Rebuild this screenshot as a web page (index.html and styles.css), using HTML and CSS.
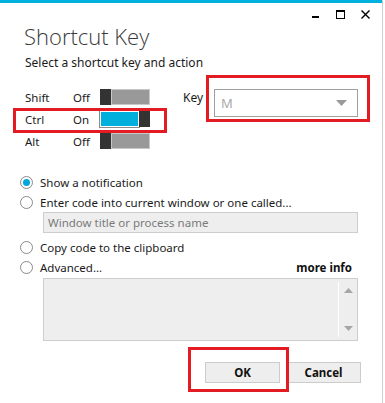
FILE: index.html
```html
<!DOCTYPE html>
<html>
<head>
<meta charset="utf-8">
<link rel="stylesheet" href="styles.css">
</head>
<body>
<div class="window">
  <div class="accent"></div>
  <div class="titlebar">
    <svg class="ctl" width="9" height="9" viewBox="0 0 9 9"><rect x="1" y="6" width="7" height="2" fill="#000"/></svg>
    <svg class="ctl" width="9" height="9" viewBox="0 0 9 9"><rect x="0.5" y="0.5" width="8" height="8" fill="none" stroke="#000"/><rect x="0.5" y="0.5" width="8" height="1.5" fill="#000"/></svg>
    <svg class="ctl" width="9" height="9" viewBox="0 0 9 9"><path d="M0.5 0.5 L8.5 8.5 M8.5 0.5 L0.5 8.5" stroke="#000" stroke-width="1.4"/></svg>
  </div>
  <h1 class="title">Shortcut Key</h1>
  <p class="subtitle">Select a shortcut key and action</p>

  <div class="keys">
    <div class="mods">
      <div class="mod"><span class="mod-name">Shift</span><span class="mod-state">Off</span><span class="toggle"><span class="knob"></span><span class="track"></span></span></div>
      <div class="mod"><span class="mod-name">Ctrl</span><span class="mod-state">On</span><span class="toggle on"><span class="track"></span><span class="knob"></span></span></div>
      <div class="mod"><span class="mod-name">Alt</span><span class="mod-state">Off</span><span class="toggle"><span class="knob"></span><span class="track"></span></span></div>
    </div>
    <div class="key">
      <span class="key-label">Key</span>
      <div class="select"><span class="select-value">M</span><svg width="11" height="6" viewBox="0 0 11 6"><path d="M0 0 H11 L5.5 6 Z" fill="#9a9a9a"/></svg></div>
    </div>
  </div>

  <div class="actions">
    <div class="option"><span class="radio checked"></span><span>Show a notification</span></div>
    <div class="option"><span class="radio"></span><span>Enter code into current window or one called...</span></div>
    <div class="field">Window title or process name</div>
    <div class="option"><span class="radio"></span><span>Copy code to the clipboard</span></div>
    <div class="option"><span class="radio"></span><span class="grow">Advanced...</span><span class="more">more info</span></div>
    <div class="textarea">
      <div class="scrollbar">
        <svg width="9" height="5" viewBox="0 0 9 5"><path d="M0 5 H9 L4.5 0 Z" fill="#a6a6a6"/></svg>
        <svg width="9" height="5" viewBox="0 0 9 5"><path d="M0 0 H9 L4.5 5 Z" fill="#a6a6a6"/></svg>
      </div>
    </div>
  </div>

  <div class="buttons">
    <button class="btn">OK</button>
    <button class="btn">Cancel</button>
  </div>

  <div class="mark mark-ctrl"></div>
  <div class="mark mark-key"></div>
  <div class="mark mark-ok"></div>
</div>
</body>
</html>
```

FILE: styles.css
```css
html, body {
  margin: 0;
  padding: 0;
  background: #fff;
}
body {
  font-family: "Noto Sans", "Open Sans", sans-serif;
  font-size: 11.5px;
  color: #1a1a1a;
}
.window {
  position: relative;
  width: 382px;
  height: 403px;
  border-right: 1px solid #cfcfcf;
  box-sizing: content-box;
}
.accent {
  height: 3px;
  background: #00b1de;
}
.titlebar {
  display: flex;
  justify-content: flex-end;
  gap: 16px;
  padding: 7px 12px 0 0;
  height: 11px;
}
.title {
  margin: 1px 0 0 24px;
  font-family: "Open Sans", sans-serif;
  font-weight: 300;
  font-size: 22px;
  line-height: 28px;
  color: #3a3a3a;
}
.subtitle {
  margin: 5px 0 0 25px;
  line-height: 16px;
  font-size: 12px;
}
.keys {
  display: flex;
  margin-top: 15px;
}
.mods {
  display: flex;
  flex-direction: column;
  padding-left: 25px;
}
.mod {
  display: flex;
  align-items: center;
  height: 22px;
}
.mod-name { width: 48px; }
.mod-state { width: 27px; }
.toggle {
  display: flex;
  width: 50px;
  height: 16px;
}
.knob {
  width: 11px;
  background: #333;
}
.track {
  flex: 1;
  background: #999;
  box-shadow: inset 0 0 0 1px #c8c8c8;
}
.toggle.on .track {
  background: #00afdb;
  box-shadow: inset 0 0 0 1px #fff, 0 0 0 1px #8a8a8a;
}
.key {
  display: flex;
  align-items: flex-start;
  margin-left: 33px;
  padding-top: 3px;
}
.key-label {
  width: 31px;
  line-height: 14px;
  padding-top: 2px;
  font-size: 12px;
}
.select {
  width: 144px;
  height: 28px;
  box-sizing: border-box;
  border: 1px solid #a0a0a0;
  display: flex;
  align-items: center;
  justify-content: space-between;
  padding: 0 10px 0 6px;
  color: #a9a9a9;
  font-size: 13px;
}
.actions {
  padding: 20px 0 0 20px;
  display: flex;
  flex-direction: column;
}
.option {
  display: flex;
  align-items: center;
  height: 20px;
  width: 333px;
}
.radio {
  width: 11px;
  height: 11px;
  border: 1px solid #8a8a8a;
  border-radius: 50%;
  margin-right: 7px;
  box-sizing: content-box;
  position: relative;
  flex: none;
}
.radio.checked::after {
  content: "";
  position: absolute;
  left: 2px;
  top: 2px;
  width: 7px;
  height: 7px;
  border-radius: 50%;
  background: #00a7da;
}
.grow { flex: 1; }
.more {
  font-weight: bold;
  color: #111;
  margin-right: 1px;
}
.field {
  margin: 0 0 4px 23px;
  width: 315px;
  height: 21px;
  box-sizing: border-box;
  border: 1px solid #cdcdcd;
  background: #eeeeee;
  color: #7a7a7a;
  padding-left: 4px;
  line-height: 19px;
}
.textarea {
  margin: 1px 0 0 23px;
  width: 315px;
  height: 63px;
  box-sizing: border-box;
  border: 1px solid #cdcdcd;
  background: #eeeeee;
  display: flex;
  justify-content: flex-end;
}
.scrollbar {
  width: 19px;
  border-left: 1px solid #fff;
  margin: 3px 0;
  display: flex;
  flex-direction: column;
  justify-content: space-between;
  align-items: center;
  padding: 6px 0 6px 0;
  box-sizing: border-box;
}
.buttons {
  display: flex;
  justify-content: flex-end;
  gap: 6px;
  padding: 21px 21px 0 0;
}
.btn {
  width: 75px;
  height: 21px;
  border: 1px solid #cccccc;
  background: #eeeeee;
  font-family: "Noto Sans", "Open Sans", sans-serif;
  font-size: 11.5px;
  font-weight: bold;
  color: #111;
  padding: 0;
}
.mark {
  position: absolute;
  border: 3px solid #e31c23;
  box-sizing: border-box;
}
.mark-ctrl { left: 13px; top: 108px; width: 154px; height: 25px; }
.mark-key { left: 206px; top: 75px; width: 164px; height: 47px; }
.mark-ok { left: 188px; top: 347px; width: 101px; height: 45px; }
```
